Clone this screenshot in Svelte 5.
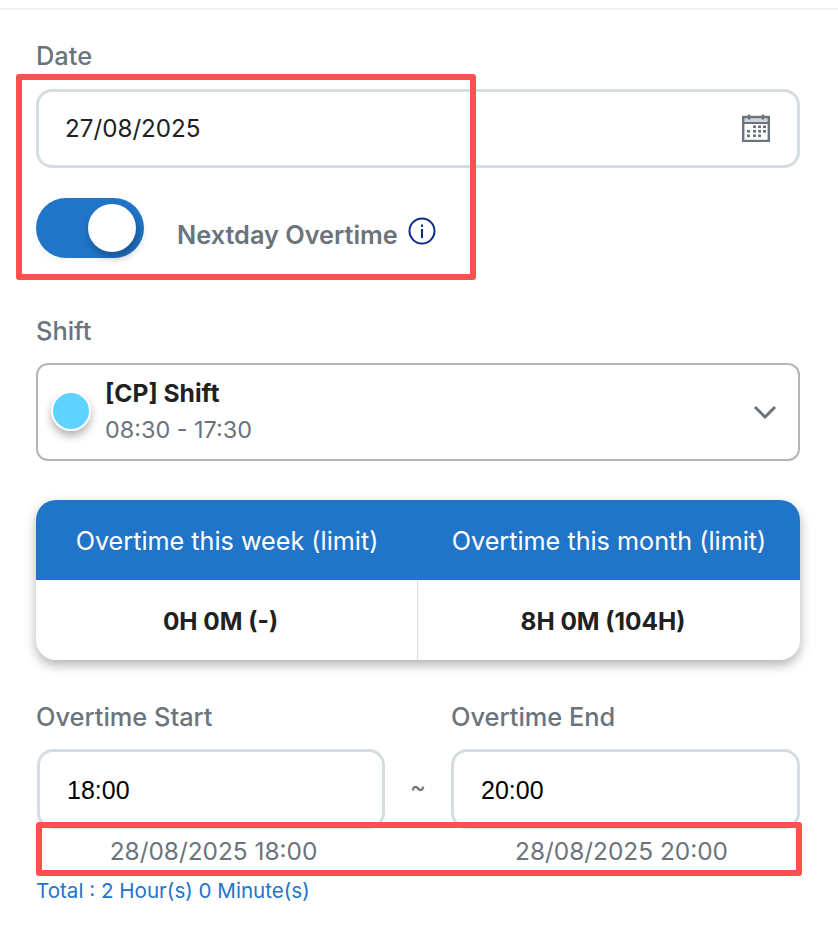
<script>
  const summary = [
    { title: "Overtime this week (limit)", value: "0H 0M (-)" },
    { title: "Overtime this month (limit)", value: "8H 0M (104H)" },
  ];
  const times = [
    { label: "Overtime Start", value: "18:00", full: "28/08/2025 18:00" },
    { label: "Overtime End", value: "20:00", full: "28/08/2025 20:00" },
  ];
</script>

<div class="page">
  <div class="form">
    <div class="label date-label">Date</div>
    <div class="input date-input">
      <span>27/08/2025</span>
      <svg class="cal" width="28" height="28" viewBox="0 0 28 28" fill="none">
        <rect x="1.2" y="3" width="25.6" height="24" stroke="#6b747c" stroke-width="2.4" />
        <rect x="1" y="3" width="26" height="5" fill="#6b747c" opacity="0.3" />
        <path d="M1 9h26" stroke="#6b747c" stroke-width="2" />
        <path d="M7 0.5v5M21 0.5v5" stroke="#6b747c" stroke-width="2.4" />
        <g fill="#6b747c">
          <rect x="11" y="11.5" width="3" height="2.6" /><rect x="16" y="11.5" width="3" height="2.6" /><rect x="21" y="11.5" width="3" height="2.6" />
          <rect x="5" y="16" width="3" height="2.6" /><rect x="11" y="16" width="3" height="2.6" /><rect x="16" y="16" width="3" height="2.6" /><rect x="21" y="16" width="3" height="2.6" />
          <rect x="5" y="20.5" width="3" height="2.6" /><rect x="11" y="20.5" width="3" height="2.6" /><rect x="16" y="20.5" width="3" height="2.6" />
        </g>
      </svg>
    </div>

    <div class="toggle-row">
      <div class="toggle"><div class="knob"></div></div>
      <span class="toggle-label">Nextday Overtime</span>
      <svg class="info" width="28" height="28" viewBox="0 0 28 28" fill="none">
        <circle cx="14" cy="14" r="12.5" stroke="#0b2a8a" stroke-width="2" />
        <rect x="13" y="12" width="2" height="9" fill="#0b2a8a" />
        <rect x="13" y="7.5" width="2" height="2.4" fill="#0b2a8a" />
      </svg>
    </div>

    <div class="label shift-label">Shift</div>
    <div class="shift">
      <div class="dot"></div>
      <div class="shift-text">
        <div class="shift-name">[CP] Shift</div>
        <div class="shift-time">08:30 - 17:30</div>
      </div>
      <svg class="chev" width="24" height="14" viewBox="0 0 24 14" fill="none">
        <path d="M2 2l10 10L22 2" stroke="#6b747c" stroke-width="3" />
      </svg>
    </div>

    <div class="card">
      <div class="card-head">
        {#each summary as s}
          <div class="card-title">{s.title}</div>
        {/each}
      </div>
      <div class="card-body">
        {#each summary as s}
          <div class="card-value">{s.value}</div>
        {/each}
      </div>
    </div>

    <div class="times">
      {#each times as t, i}
        {#if i === 1}
          <div class="tilde">~</div>
        {/if}
        <div class="time-col" class:end={i === 1}>
          <div class="label">{t.label}</div>
          <div class="input time-input">{t.value}</div>
          <div class="time-full">{t.full}</div>
        </div>
      {/each}
    </div>
    <div class="total">Total : 2 Hour(s) 0 Minute(s)</div>
  </div>

  <!-- anotaciones rojas sobre la captura -->
  <div class="mark mark-date"></div>
  <div class="mark mark-times"></div>
</div>

<style>
  :global(body) {
    margin: 0;
    background: #fff;
  }

  .page {
    position: relative;
    width: 838px;
    height: 938px;
    overflow: hidden;
    font-family: Inter, "Noto Sans", sans-serif;
    color: #212121;
  }

  .form {
    margin-top: 8px;
    border-top: 2px solid #f1f2f3;
    padding: 0 38px 0 36px;
  }

  .label {
    font-size: 25.4px;
    line-height: 30px;
    font-weight: 500;
    color: #6b747c;
  }

  .date-label {
    margin-top: 31px;
  }

  .input {
    box-sizing: border-box;
    border: 3px solid #d5dde0;
    border-radius: 16px;
    background: #fff;
    font-size: 24px;
    display: flex;
    align-items: center;
  }

  .date-input {
    height: 79px;
    margin-top: 18px;
    padding: 0 27px 0 26px;
    font-size: 24.2px;
    justify-content: space-between;
  }

  .cal {
    margin-top: -2px;
  }

  .toggle-row {
    display: flex;
    align-items: center;
    margin-top: 30px;
    height: 60px;
  }

  .toggle {
    position: relative;
    width: 108px;
    height: 60px;
    border-radius: 30px;
    background: #2175c9;
    box-shadow: 0 2px 10px rgba(0, 0, 0, 0.05);
  }

  .knob {
    position: absolute;
    top: 6px;
    left: 52px;
    width: 48px;
    height: 48px;
    border-radius: 50%;
    background: #fff;
    box-shadow: 2px 5px 8px rgba(0, 0, 0, 0.3);
  }

  .toggle-label {
    margin-left: 33px;
    margin-top: 12px;
    font-size: 25.3px;
    font-weight: 600;
    color: #6b747c;
  }

  .info {
    margin-left: 10px;
    margin-top: 6px;
  }

  .shift-label {
    margin-top: 58px;
  }

  .shift {
    box-sizing: border-box;
    display: flex;
    align-items: center;
    height: 98px;
    margin-top: 17px;
    border: 2px solid #b5b5b5;
    border-radius: 12px;
    padding: 0 21px 0 13px;
  }

  .dot {
    box-sizing: border-box;
    width: 40px;
    height: 40px;
    margin-top: -2px;
    border-radius: 50%;
    border: 2px solid #fff;
    background: #5fd3ff;
    box-shadow: 0 5px 8px rgba(0, 0, 0, 0.3);
  }

  .shift-text {
    flex: 1;
    margin-left: 14px;
    margin-top: -2px;
  }

  .shift-name {
    font-size: 24.6px;
    line-height: 34px;
    font-weight: 700;
  }

  .shift-time {
    margin-top: 3px;
    font-size: 23.4px;
    line-height: 34px;
    color: #6b747c;
  }

  .card {
    margin-top: 39px;
    border-radius: 20px;
    background: #fff;
    overflow: hidden;
    box-shadow: 0 5px 12px rgba(0, 0, 0, 0.3);
  }

  .card-head,
  .card-body {
    display: grid;
    grid-template-columns: 382px 1fr;
    height: 80px;
    align-items: center;
    text-align: center;
  }

  .card-head {
    background: #2175c9;
  }

  .card-title {
    padding-top: 2px;
    color: #fff;
    font-size: 25.2px;
    line-height: 78px;
  }

  .card-value {
    padding: 2px 12px 0 0;
    font-size: 24.4px;
    font-weight: 700;
    line-height: 78px;
  }

  .card-value:first-child {
    border-right: 1px solid #dcdcdc;
  }

  .times {
    display: grid;
    grid-template-columns: 349px 66px 349px;
    margin-top: 42px;
  }

  .time-col {
    min-width: 0;
  }

  .time-input {
    height: 80px;
    margin-top: 17px;
    margin-left: 1px;
    padding: 2px 0 0 27px;
    color: #000;
    font-family: "Liberation Sans", sans-serif;
    font-size: 25px;
  }

  .end .time-input {
    margin-left: 0;
  }

  .tilde {
    padding-top: 65px;
    text-align: center;
    font-size: 24px;
    line-height: 40px;
    color: #6b747c;
  }

  .time-full {
    margin-top: 7px;
    padding-left: 6px;
    text-align: center;
    font-size: 24.4px;
    line-height: 30px;
    color: #6b747c;
  }

  .end .time-full {
    padding-left: 0;
    padding-right: 8px;
  }

  .total {
    margin-top: 12px;
    font-size: 20.6px;
    line-height: 26px;
    color: #2175c9;
  }

  .mark {
    position: absolute;
    box-sizing: border-box;
    border: 6px solid #ff5050;
    border-radius: 3px;
  }

  .mark-date {
    left: 16px;
    top: 74px;
    width: 460px;
    height: 206px;
  }

  .mark-times {
    left: 36px;
    top: 822px;
    width: 766px;
    height: 54px;
  }
</style>
